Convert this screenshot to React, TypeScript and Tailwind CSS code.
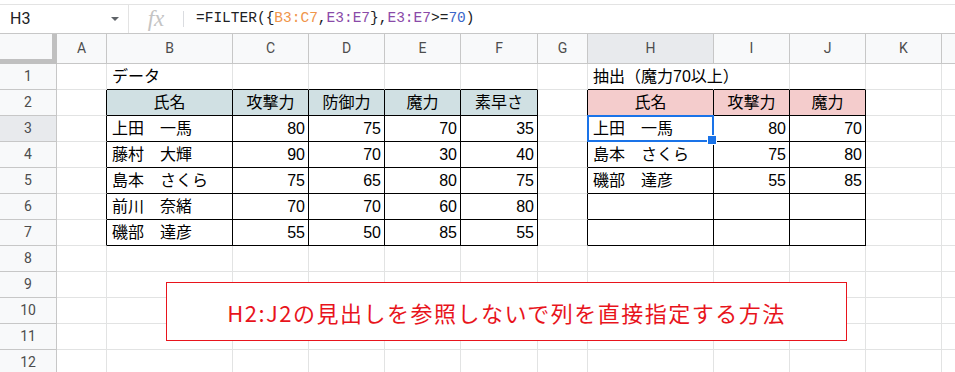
import React from "react";

type Cell = { t: string; head?: "blue" | "red" };

const letters = ["A", "B", "C", "D", "E", "F", "G", "H", "I", "J", "K", ""];
const colW = [
  "w-[50px]",
  "w-[126px]",
  "w-[76px]",
  "w-[76px]",
  "w-[76px]",
  "w-[77px]",
  "w-[50px]",
  "w-[126px]",
  "w-[76px]",
  "w-[76px]",
  "w-[76px]",
  "w-[76px]",
];

// data table B2:F7, extract table H2:J7
const t1 = (r: number, c: number) => r >= 2 && r <= 7 && c >= 1 && c <= 5;
const t2 = (r: number, c: number) => r >= 2 && r <= 7 && c >= 7 && c <= 9;
const inTable = (r: number, c: number) => t1(r, c) || t2(r, c);

const cells: Record<string, Cell> = {};
const put = (r: number, c0: number, vals: string[], head?: "blue" | "red") => {
  vals.forEach((t, i) => {
    cells[`${r}-${c0 + i}`] = { t, head };
  });
};

put(1, 1, ["データ"]);
put(2, 1, ["氏名", "攻撃力", "防御力", "魔力", "素早さ"], "blue");
put(3, 1, ["上田　一馬", "80", "75", "70", "35"]);
put(4, 1, ["藤村　大輝", "90", "70", "30", "40"]);
put(5, 1, ["島本　さくら", "75", "65", "80", "75"]);
put(6, 1, ["前川　奈緒", "70", "70", "60", "80"]);
put(7, 1, ["磯部　達彦", "55", "50", "85", "55"]);

put(1, 7, ["抽出（魔力70以上）"]);
put(2, 7, ["氏名", "攻撃力", "魔力"], "red");
put(3, 7, ["上田　一馬", "80", "70"]);
put(4, 7, ["島本　さくら", "75", "80"]);
put(5, 7, ["磯部　達彦", "55", "85"]);

// H1 text spills into I1, so that gridline is hidden
const hideRight = (r: number, c: number) => r === 1 && c === 7;

const rows = Array.from({ length: 12 }, (_, i) => i + 1);

function FormulaBar() {
  return (
    <div className="pt-[4px]">
      <div className="flex h-[30px] border-t border-b border-t-[#e3e3e3] border-b-[#c7c7c7] bg-white">
        <div className="w-[129px] shrink-0 flex items-center justify-between pl-[10px] pr-[9px] border-r border-[#e3e3e3]">
          <span className="text-[16px] text-[#202124] font-['Roboto',sans-serif]">H3</span>
          <svg width="8" height="4" viewBox="0 0 8 4">
            <path d="M0 0h8L4 4z" fill="#5f6368" />
          </svg>
        </div>
        <div className="w-[55px] shrink-0 flex items-center">
          <span className="flex-1 text-center italic text-[23px] leading-none text-[#c4c4c4] font-['Liberation_Serif',serif] -mt-[2px]">
            fx
          </span>
          <div className="w-px h-[16px] bg-[#dadce0]" />
        </div>
        <div className="flex items-center pl-[12px] text-[14.5px] text-[#202124] font-['Liberation_Mono',monospace]">
          <span>=FILTER({"{"}</span>
          <span className="text-[#f0954a]">B3:C7</span>
          <span>,</span>
          <span className="text-[#8a4aa8]">E3:E7</span>
          <span>{"},"}</span>
          <span className="text-[#8a4aa8]">E3:E7</span>
          <span>{">="}</span>
          <span className="text-[#3a66c8]">70</span>
          <span>)</span>
        </div>
      </div>
    </div>
  );
}

function ColumnHeader() {
  return (
    <div className="flex h-[30px]">
      <div className="w-[57px] shrink-0 bg-[#f8f9fa] border-r-[5px] border-b-[5px] border-[#c0c0c0]" />
      {letters.map((l, c) => (
        <div
          key={c}
          className={`${colW[c]} shrink-0 flex items-center justify-center border-r border-b border-[#c7c7c7] text-[14px] text-[#4d4d4d] font-['Roboto',sans-serif] ${
            c === 7 ? "bg-[#e8eaed]" : "bg-[#f8f9fa]"
          }`}
        >
          {l}
        </div>
      ))}
    </div>
  );
}

function SheetCell({ r, c }: { r: number; c: number }) {
  const cell = cells[`${r}-${c}`];
  const rightBlack = inTable(r, c) || inTable(r, c + 1);
  const bottomBlack = inTable(r, c) || inTable(r + 1, c);
  const isNum = cell ? /^\d+$/.test(cell.t) : false;
  const bg = cell?.head === "blue" ? "bg-[#d0e0e3]" : cell?.head === "red" ? "bg-[#f4cccc]" : "bg-white";
  const align = cell?.head ? "justify-center" : isNum ? "justify-end pr-[3px]" : "justify-start pl-[5px]";
  const rightColor = rightBlack ? "border-r-black" : hideRight(r, c) ? "border-r-white" : "border-r-[#e2e3e3]";
  const selected = r === 3 && c === 7;

  return (
    <div
      className={`${colW[c]} shrink-0 relative flex items-center whitespace-nowrap border-r border-b ${rightColor} ${
        bottomBlack ? "border-b-black" : "border-b-[#e2e3e3]"
      } ${bg} ${align}`}
    >
      {cell && <span className="relative z-10 text-[16px] leading-none text-black">{cell.t}</span>}
      {selected && (
        <>
          <div className="absolute -inset-px z-20 border-2 border-[#1a73e8]" />
          <div className="absolute right-[-4px] bottom-[-4px] z-20 w-[10px] h-[10px] bg-[#1a73e8] border border-white" />
        </>
      )}
    </div>
  );
}

export default function App() {
  return (
    <div className="w-[955px] h-[372px] overflow-hidden bg-white font-['Liberation_Sans','Noto_Sans_CJK_JP',sans-serif]">
      <FormulaBar />
      <div className="relative">
        <ColumnHeader />
        {rows.map((r) => (
          <div key={r} className="flex h-[26px]">
            <div
              className={`w-[57px] shrink-0 flex items-center justify-center border-r border-b border-[#c7c7c7] text-[14px] text-[#4d4d4d] font-['Roboto',sans-serif] ${
                r === 3 ? "bg-[#e8eaed]" : "bg-[#f8f9fa]"
              }`}
            >
              {r}
            </div>
            {letters.map((_, c) => (
              <SheetCell key={c} r={r} c={c} />
            ))}
          </div>
        ))}

        {/* text box drawn over the sheet */}
        <div className="absolute left-[166px] top-[248px] z-30 w-[681px] h-[59px] border border-[#e8141c] bg-white flex items-center justify-center">
          <span className="text-[22px] leading-none tracking-[1.5px] text-[#e8141c] font-['Noto_Sans_CJK_JP',sans-serif]">
            H2:J2の見出しを参照しないで列を直接指定する方法
          </span>
        </div>
      </div>
    </div>
  );
}
